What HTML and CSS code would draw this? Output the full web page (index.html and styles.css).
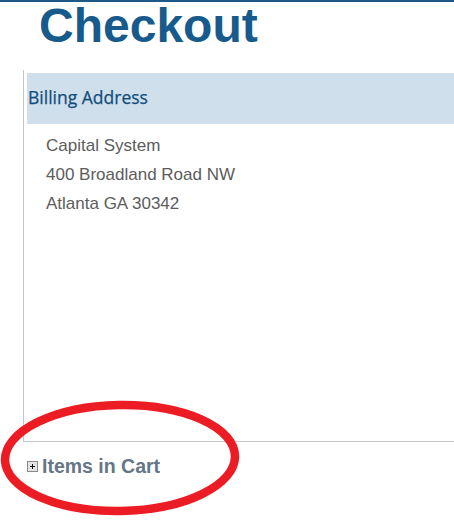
FILE: index.html
```html
<!DOCTYPE html>
<html lang="en">
<head>
<meta charset="utf-8">
<title>Checkout</title>
<link rel="stylesheet" href="styles.css">
</head>
<body>
<div class="page">
  <h1 class="title">Checkout</h1>
  <section class="panel">
    <div class="panel-header">Billing Address</div>
    <div class="panel-body">
      <div class="line">Capital System</div>
      <div class="line">400 Broadland Road NW</div>
      <div class="line">Atlanta GA 30342</div>
    </div>
  </section>
  <div class="cart-toggle">
    <span class="expander" aria-hidden="true"></span>
    <span class="cart-label">Items in Cart</span>
  </div>
  <svg class="annotation" width="242" height="118" viewBox="0 0 242 118" aria-hidden="true">
    <ellipse cx="120" cy="58" rx="115" ry="53" fill="none" stroke="#ec1c24" stroke-width="8.5" transform="rotate(-1 120 58)"/>
  </svg>
</div>
</body>
</html>
```

FILE: styles.css
```css
html, body {
  margin: 0;
  padding: 0;
  background: #ffffff;
}

.page {
  position: relative;
  border-top: 2px solid #1e5887;
  height: 528px;
  overflow: hidden;
  font-family: "Liberation Sans", Arial, sans-serif;
}

.title {
  margin: 0 0 0 39px;
  font-family: "Liberation Sans", Arial, sans-serif;
  font-weight: 700;
  font-size: 48px;
  line-height: 48px;
  color: #175a8c;
}

.panel {
  margin: 20px 0 0 23px;
  padding: 3px 0 0 3px;
  border-left: 1px solid #c6c6c6;
  border-bottom: 1px solid #c6c6c6;
}

.panel-header {
  box-sizing: border-box;
  height: 51px;
  padding: 12px 0 0 1px;
  background: #cfe0ec;
  font-family: "Open Sans", sans-serif;
  font-size: 17.5px;
  line-height: 24px;
  color: #134d7c;
  -webkit-text-stroke: 0.25px #134d7c;
}

.panel-body {
  box-sizing: border-box;
  height: 317px;
  padding: 7px 0 0 19px;
  font-family: "Liberation Sans", Arial, sans-serif;
  font-size: 17px;
  line-height: 29px;
  color: #5c5c5c;
}

.cart-toggle {
  display: flex;
  align-items: center;
  gap: 4px;
  margin: 13px 0 0 27px;
  height: 22px;
}

.expander {
  position: relative;
  box-sizing: border-box;
  width: 11px;
  height: 11px;
  border: 1px solid #8a8a8a;
  background: #e4e4e4;
}

.expander::before,
.expander::after {
  content: "";
  position: absolute;
  background: #111111;
}

.expander::before {
  left: 2px;
  top: 4px;
  width: 5px;
  height: 1px;
}

.expander::after {
  left: 4px;
  top: 2px;
  width: 1px;
  height: 5px;
}

.cart-label {
  font-family: "Liberation Sans", Arial, sans-serif;
  font-weight: 700;
  font-size: 19.5px;
  line-height: 22px;
  color: #657687;
}

.annotation {
  position: absolute;
  left: 0;
  top: 398px;
}
```
